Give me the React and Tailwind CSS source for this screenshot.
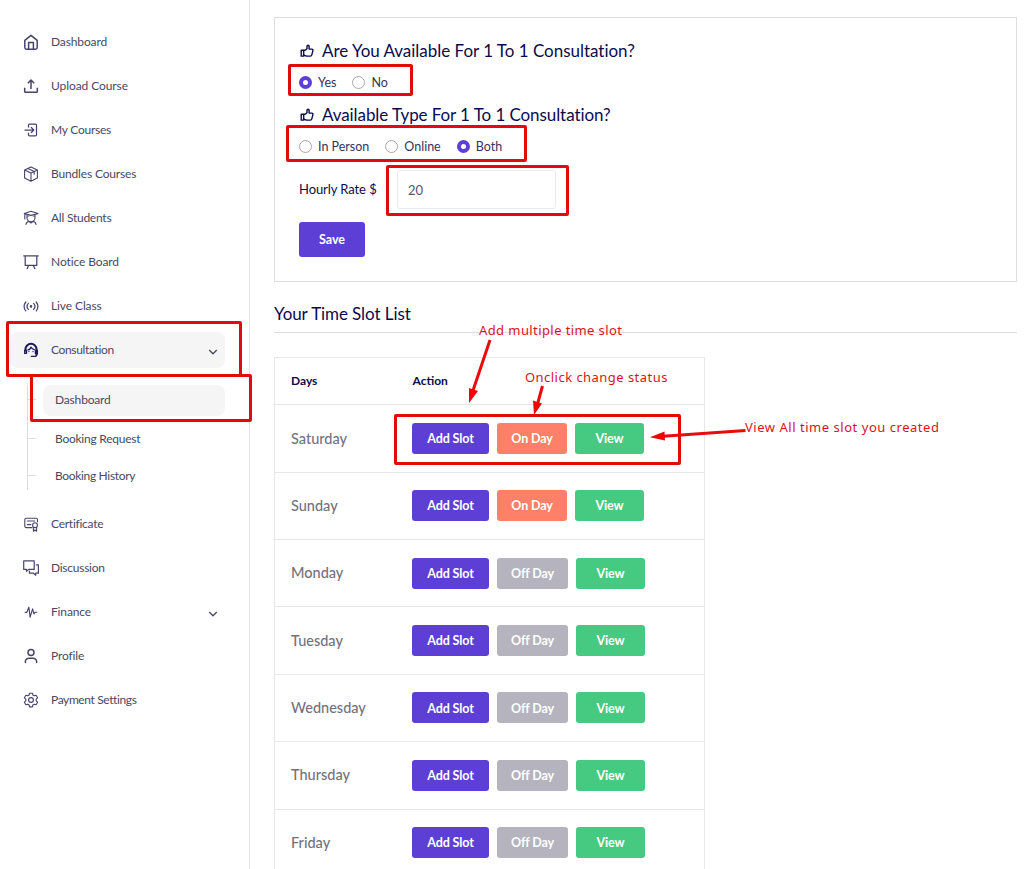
import React from "react";

function Icon({ children, size = "size-4" }) {
  return (
    <svg viewBox="0 0 16 16" className={`${size} shrink-0`} fill="none" stroke="currentColor" strokeWidth="1.25" strokeLinecap="round" strokeLinejoin="round">
      {children}
    </svg>
  );
}

const icons = {
  home: (
    <>
      <path strokeWidth="1.5" d="M1.8 6.4 8 1.3l6.2 5.1v7.2a1.6 1.6 0 0 1-1.6 1.6H3.4a1.6 1.6 0 0 1-1.6-1.6z" />
      <path strokeWidth="1.5" d="M5.6 15V8.6h4.8V15" />
    </>
  ),
  upload: <path strokeWidth="1.5" strokeLinecap="butt" d="M8 11V2M4.8 5.2 8 2l3.2 3.2M1.7 9.8v3.6c0 .5.4.9.9.9h10.8c.5 0 .9-.4.9-.9V9.8" />,
  enter: <path d="M5.5 5V3.2c0-.6.4-1 1-1h6c.6 0 1 .4 1 1v9.6c0 .6-.4 1-1 1h-6c-.6 0-1-.4-1-1V11M2 8h8.6M8.3 5.5 10.8 8l-2.5 2.5" />,
  box: <path strokeWidth="1.1" d="M8 .9 14.4 4v8L8 15.2 1.6 12V4zM1.6 4 8 7.1 14.4 4M8 7.1v8.1M4.8 2.5l6.4 3.1v2.6" />,
  student: (
    <>
      <path strokeWidth="1.1" d="M8 1.2 15 3.6 8 5.2 1.3 3.6zM1.8 4v5M4 4.6v3.1a4 4 0 0 0 8 0V4.6M4 6.2c2.6-.9 5.4-.9 8 0" />
      <path strokeWidth="1.1" d="M3 14.4c.2-1.6 1.4-2.7 3-3L8 13l2-1.6c1.6.3 2.8 1.4 3 3" />
    </>
  ),
  board: <path strokeLinecap="butt" d="M.3 1.8h15.4M2.2 1.8v9.6h11.6V1.8M5.6 11.4 4 15M10.4 11.4 12 15" />,
  live: (
    <>
      <circle cx="8" cy="8.4" r=".7" fill="currentColor" />
      <path d="M5.4 5.4a4.4 4.4 0 0 0 0 6M10.6 5.4a4.4 4.4 0 0 1 0 6M2.8 4a7.2 7.2 0 0 0 0 8.8M13.2 4a7.2 7.2 0 0 1 0 8.8" />
    </>
  ),
  agent: (
    <>
      <path strokeWidth="2" d="M2.4 8.5V7.4a5.6 5.6 0 0 1 11.2 0v5.4" />
      <path strokeWidth="1.3" d="M4.9 7.8c1.5-.3 2.6-1.2 3-2.6.9 1.4 1.9 2.1 3.4 2.4M1.7 8.4v3h1.8v-3zM12.4 8.4v3.2h2V8.4zM13.6 12.4c0 1.3-.7 2-2 2H8.3" />
      <path strokeWidth="1.2" d="M5.9 9.6h.1M9.9 9.6h.1" />
    </>
  ),
  certificate: (
    <>
      <path strokeWidth="1.1" d="M9 11.6H3.2a1.4 1.4 0 0 1-1.4-1.4V3.6c0-.8.6-1.4 1.4-1.4h9.9c.8 0 1.4.6 1.4 1.4v2.2M4.3 5h7.4M4.3 8.6h3.6" />
      <circle cx="12" cy="9.2" r="2.4" strokeWidth="1.1" />
      <path strokeWidth="1.1" d="M10.4 11.4v3.8L12 14l1.6 1.2v-3.8" />
    </>
  ),
  chat: <path strokeWidth="1.2" d="M.7.8h10.5v8.6H5.6l-2.1 2-.1-2H.7zM13.2 4.8h2.2v8.4h-2.6l-.1 2-2.3-2H6.4v-2" />,
  pulse: <path strokeWidth="1.15" d="M2.2 8.3h1.6L5.9 3.2l1.2 10 2.5-8.3 1.4 5 1.2-1.7h1.7" />,
  user: (
    <>
      <circle cx="8" cy="4.4" r="3" strokeWidth="1.5" />
      <path strokeWidth="1.5" d="M2.4 14.4v-.8c0-2 1.8-3.4 3.8-3.4h3.6c2 0 3.8 1.4 3.8 3.4v.8" />
    </>
  ),
  gear: (
    <>
      <circle cx="8" cy="8" r="2.4" strokeWidth="1.15" />
      <path strokeWidth="1.15" d="M6.6 1.2h2.8l.5 1.8 1.3.8 1.9-.5 1.5 2.5-1.4 1.3v1.8l1.4 1.3-1.5 2.5-1.9-.5-1.3.8-.5 1.8H6.6L6.1 13l-1.3-.8-1.9.5-1.5-2.5 1.4-1.3V7.1L1.4 5.8l1.5-2.5 1.9.5L6.1 3z" />
    </>
  ),
  thumb: <path strokeWidth="1.6" d="M1.4 7.2h2.8v6.7H1.4zM4.2 7.2h1.6L8 5.4V2.6c0-.8.5-1.2 1.2-1.2.8 0 1.2.5 1.2 1.3v3.1h3.2c.9 0 1.4.7 1.2 1.5l-1.3 5.2c-.2.8-.8 1.3-1.6 1.3H7.4L4.2 12.6" />,
};

function Chevron() {
  return (
    <svg viewBox="0 0 10 6" className="mt-1 mr-[7px] ml-auto h-1.5 w-2.5" fill="none" stroke="currentColor" strokeWidth="1.3">
      <path d="M1.2 1 5 4.8 8.8 1" />
    </svg>
  );
}

function NavItem({ icon, label, tracking, active, expandable }) {
  return (
    <a className={`flex h-9 shrink-0 items-center rounded-lg pl-[13px] text-[12px] text-[#484963] ${active ? "bg-[#f5f5f6]" : ""}`}>
      <span className={`flex ${active ? "text-[#1b1b55]" : "text-[#45456b]"}`}>
        <Icon>{icons[icon]}</Icon>
      </span>
      <span className={`ml-3 whitespace-nowrap ${tracking}`}>{label}</span>
      {expandable && <Chevron />}
    </a>
  );
}

function SubItem({ label, tracking, active }) {
  return (
    <a className="flex h-[31px] shrink-0 items-center text-[12px] text-[#484963]">
      <span className="mb-0.5 h-px w-2 bg-[#dcdce0]" />
      <span className={`ml-[7px] flex h-full flex-1 items-center rounded-lg pb-0.5 pl-3 whitespace-nowrap ${tracking} ${active ? "bg-[#f5f5f6]" : ""}`}>{label}</span>
    </a>
  );
}

function Sidebar() {
  return (
    <aside className="flex w-[250px] shrink-0 flex-col gap-2 border-r border-[#e6e6ea] pt-6 pr-6 pl-2.5">
      <NavItem icon="home" label="Dashboard" tracking="tracking-[-0.13px]" />
      <NavItem icon="upload" label="Upload Course" tracking="tracking-[-0.08px]" />
      <NavItem icon="enter" label="My Courses" tracking="tracking-[-0.24px]" />
      <NavItem icon="box" label="Bundles Courses" tracking="tracking-[-0.16px]" />
      <NavItem icon="student" label="All Students" tracking="tracking-[-0.24px]" />
      <NavItem icon="board" label="Notice Board" tracking="tracking-[-0.1px]" />
      <NavItem icon="live" label="Live Class" tracking="tracking-[-0.1px]" />
      <NavItem icon="agent" label="Consultation" tracking="tracking-[-0.35px]" active expandable />
      <div className="mt-[9px] mb-2 ml-[17px] flex h-[105px] shrink-0 flex-col border-l border-[#dcdce0]">
        <SubItem label="Dashboard" tracking="tracking-[-0.17px]" active />
        <div className="h-2 shrink-0" />
        <SubItem label="Booking Request" tracking="tracking-[-0.25px]" />
        <div className="h-1.5 shrink-0" />
        <SubItem label="Booking History" tracking="tracking-[-0.33px]" />
      </div>
      <NavItem icon="certificate" label="Certificate" tracking="tracking-[-0.25px]" />
      <NavItem icon="chat" label="Discussion" tracking="tracking-[-0.26px]" />
      <NavItem icon="pulse" label="Finance" tracking="tracking-[-0.15px]" expandable />
      <NavItem icon="user" label="Profile" tracking="tracking-[-0.15px]" />
      <NavItem icon="gear" label="Payment Settings" tracking="tracking-[-0.38px]" />
    </aside>
  );
}

function Radio({ label, checked, gap = "" }) {
  return (
    <label className={`flex items-center text-[12.5px] text-[#33335a] ${gap}`}>
      <span className={`mr-1.5 size-[13px] rounded-full bg-white ${checked ? "border-4 border-[#5d3fd6]" : "border border-[#a9a9ad]"}`} />
      <span className="pt-0.5">{label}</span>
    </label>
  );
}

function Question({ tracking, children }) {
  return (
    <h3 className="flex h-6 items-center gap-2 pl-px text-[17px] whitespace-nowrap text-[#0b0b4b]">
      <span className="mt-0.5 flex">
        <Icon size="size-3.5">{icons.thumb}</Icon>
      </span>
      <span className={`pt-px ${tracking}`}>{children}</span>
    </h3>
  );
}

function AvailabilityCard() {
  return (
    <section className="h-[265px] shrink-0 border border-[#dedee2] pt-5 pl-6">
      <Question tracking="tracking-[-0.02px]">Are You Available For 1 To 1 Consultation?</Question>
      <div className="mt-2.5 flex h-5 items-center">
        <Radio label="Yes" checked gap="mr-4" />
        <Radio label="No" />
      </div>
      <div className="mt-2.5">
        <Question tracking="tracking-[-0.08px]">Available Type For 1 To 1 Consultation?</Question>
      </div>
      <div className="mt-2.5 flex h-5 items-center">
        <Radio label="In Person" gap="mr-4" />
        <Radio label="Online" gap="mr-4" />
        <Radio label="Both" checked />
      </div>
      <div className="mt-3.5 flex items-center text-[13px] text-[#0b0b4b]">
        <span className="w-[98px] tracking-[-0.08px] whitespace-nowrap">Hourly Rate $</span>
        <input defaultValue="20" className="h-[39px] w-[159px] rounded-[3px] border border-[#eaeaee] pl-2.5 text-[13px] text-[#55566b]" />
      </div>
      <button className="mt-[13px] h-[35px] w-[66px] rounded-[3px] bg-[#5d3fd6] pt-0.5 text-[12.5px] font-bold text-white">Save</button>
    </section>
  );
}

function SlotTable() {
  const days = [
    ["Saturday", true],
    ["Sunday", true],
    ["Monday", false],
    ["Tuesday", false],
    ["Wednesday", false],
    ["Thursday", false],
    ["Friday", false],
  ];
  return (
    <div className="mt-6 w-[431px] shrink-0 border border-[#e7e7ea]">
      <div className="flex h-[47.2px] items-center border-b border-[#e7e7ea] pl-4 text-[12px] font-bold text-[#0b0b4b]">
        <span className="w-[121.5px]">Days</span>
        <span>Action</span>
      </div>
      {days.map(([day, on]) => (
        <div key={day} className="flex h-[67.4px] items-center border-b border-[#e7e7ea] pl-4">
          <span className="w-[121px] text-[14.5px] font-medium text-[#72727d]">{day}</span>
          <div className="flex h-[31px] gap-2 text-[12.5px] font-bold tracking-[-0.12px] text-white">
            <button className="w-[77px] rounded-[3px] bg-[#5d3fd6] pt-0.5">Add Slot</button>
            <button className={`rounded-[3px] pt-0.5 ${on ? "w-[70px] bg-[#ff8068]" : "w-[71px] bg-[#b5b4be]"}`}>{on ? "On Day" : "Off Day"}</button>
            <button className="w-[69px] rounded-[3px] bg-[#46c981] pt-0.5">View</button>
          </div>
        </div>
      ))}
    </div>
  );
}

function Annotations() {
  const box = "absolute rounded-[2px] border-3 border-[#e00c0c]";
  const note = "absolute font-['Noto_Sans'] text-[13px] leading-4 whitespace-nowrap text-[#d8141b]";
  return (
    <div className="pointer-events-none absolute inset-0">
      <div className={`${box} top-[64px] left-[288px] h-8 w-[125px]`} />
      <div className={`${box} top-[125px] left-[286px] h-[37px] w-[241px]`} />
      <div className={`${box} top-[165px] left-[386px] h-[51px] w-[183px]`} />
      <div className={`${box} top-[321px] left-[6px] h-14 w-[236px]`} />
      <div className={`${box} top-[374px] left-[30px] h-12 w-[222px]`} />
      <div className={`${box} top-[414px] left-[394px] h-[51px] w-[287px]`} />
      <svg className="absolute inset-0 h-full w-full" viewBox="0 0 1035 869" fill="none" stroke="#e80b0b" strokeWidth="3">
        <path d="M490 340 472.5 392M542.5 386 537.5 404M745.5 430.5 663 436.3" />
        <g fill="#f00505" stroke="none">
          <path d="M469 403 469 388 478 391zM534 415 533 400.5 542 403.5zM650 437.2 664.5 431.5 665 440.5z" />
        </g>
      </svg>
      <span className={`${note} top-[322px] left-[479px] tracking-[0.41px]`}>Add multiple time slot</span>
      <span className={`${note} top-[369px] left-[525px] tracking-[0.46px]`}>Onclick change status</span>
      <span className={`${note} top-[419px] left-[745px] tracking-[0.53px]`}>View All time slot you created</span>
    </div>
  );
}

export default function App() {
  return (
    <div className="relative flex h-[869px] w-[1035px] overflow-hidden bg-white font-[Lato,sans-serif]">
      <Sidebar />
      <main className="flex flex-1 flex-col pt-[17px] pr-[18px] pl-6">
        <AvailabilityCard />
        <h2 className="mt-5 flex h-[31px] shrink-0 items-start border-b border-[#dedee2] text-[17px] leading-6 tracking-[-0.08px] text-[#0b0b4b]">Your Time Slot List</h2>
        <SlotTable />
      </main>
      <Annotations />
    </div>
  );
}
